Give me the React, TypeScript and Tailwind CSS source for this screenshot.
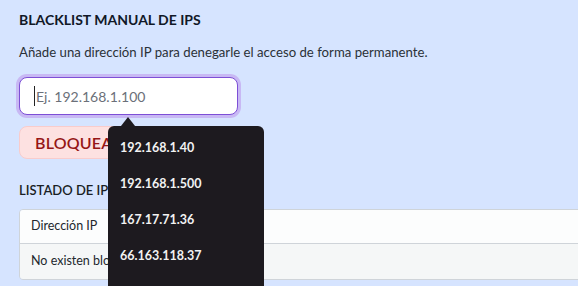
export default function App() {
  const ips = ['192.168.1.40', '192.168.1.500', '167.17.71.36', '66.163.118.37'];

  return (
    <div className="w-[578px] h-[286px] overflow-hidden bg-[#d6e4ff] font-['Lato',sans-serif] text-[#1f2328]">
      <div className="pl-[19px] pt-[11px]">
        {/* Cabecera */}
        <h2 className="text-[14px] font-bold leading-[18px] text-[#111827]">BLACKLIST MANUAL DE IPS</h2>
        <p className="mt-[14px] text-[13.2px] leading-[18px] text-[#2b3138]">
          Añade una dirección IP para denegarle el acceso de forma permanente.
        </p>

        {/* Campo + sugerencias */}
        <div className="relative mt-[16px] w-[219px]">
          <div className="flex h-[38px] items-center rounded-[8px] border-[1.5px] border-[#7d4fd6] bg-white pl-[14px] ring-[3px] ring-[#c8b8f4]">
            <span className="mr-[1px] h-[20px] w-[1px] bg-[#222]" />
            <span className="text-[14px] text-[#6b7079]">Ej. 192.168.1.100</span>
          </div>

          <div className="absolute left-[89px] top-[49px] z-10 h-[190px] w-[156px] rounded-[6px] bg-[#1d1a1f] pl-[12px] pt-[13px]">
            <div className="absolute -top-[9px] left-[13px] h-0 w-0 border-x-[7px] border-b-[9px] border-x-transparent border-b-[#1d1a1f]" />
            {ips.map((ip) => (
              <div key={ip} className="h-[36px] text-[12.5px] font-bold leading-[18px] text-[#f2f2f2]">
                {ip}
              </div>
            ))}
          </div>
        </div>

        <button className="mt-[11px] h-[33px] rounded-[8px] border border-[#f9cccc] bg-[#fde1e1] px-[15px] text-[16px] font-semibold tracking-[0.2px] text-[#961616]">
          BLOQUEAR IP
        </button>

        {/* Listado */}
        <h3 className="mt-[22px] text-[13px] font-semibold leading-[18px] text-[#1a1f25]">LISTADO DE IPS BLOQUEADAS</h3>
        <div className="mt-[10px] w-[700px] overflow-hidden rounded-[4px] border border-[#cfd4d9] text-[12.5px] text-[#22272d]">
          <div className="flex h-[34px] items-center border-b border-[#cfd4d9] bg-[#fcfdfd] px-[11px]">Dirección IP</div>
          <div className="flex h-[35px] items-center bg-[#f5f7f7] px-[11px]">No existen bloqueos.</div>
        </div>
      </div>
    </div>
  );
}
